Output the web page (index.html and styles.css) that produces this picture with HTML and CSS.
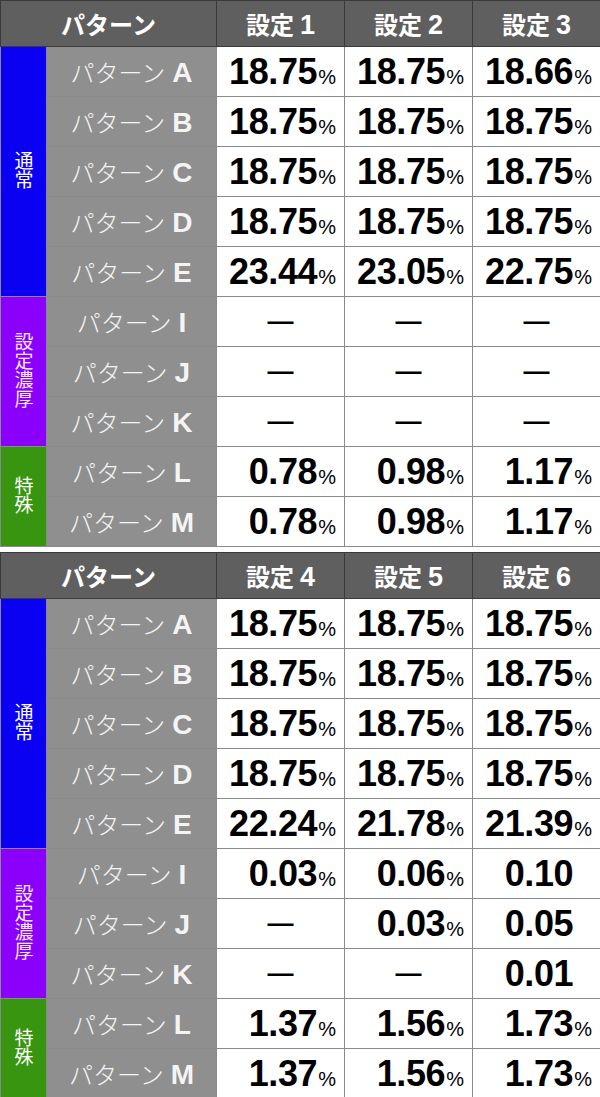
FILE: index.html
```html
<!DOCTYPE html>
<html lang="ja">
<head>
<meta charset="utf-8">
<title>パターン振り分け</title>
<link rel="stylesheet" href="styles.css">
</head>
<body>
<div class="page">
  <table class="rates">
    <colgroup>
      <col class="c-cat"><col class="c-pat"><col class="c-set"><col class="c-set"><col class="c-set">
    </colgroup>
    <thead>
      <tr class="head">
        <th colspan="2">パターン</th>
        <th>設定<b>1</b></th>
        <th>設定<b>2</b></th>
        <th>設定<b>3</b></th>
      </tr>
    </thead>
    <tbody>
      <tr>
        <td class="cat blue" rowspan="5"><span>通常</span></td>
        <td class="pat">パターン<b>A</b></td>
        <td class="num">18.75<i>%</i></td><td class="num">18.75<i>%</i></td><td class="num">18.66<i>%</i></td>
      </tr>
      <tr>
        <td class="pat">パターン<b>B</b></td>
        <td class="num">18.75<i>%</i></td><td class="num">18.75<i>%</i></td><td class="num">18.75<i>%</i></td>
      </tr>
      <tr>
        <td class="pat">パターン<b>C</b></td>
        <td class="num">18.75<i>%</i></td><td class="num">18.75<i>%</i></td><td class="num">18.75<i>%</i></td>
      </tr>
      <tr>
        <td class="pat">パターン<b>D</b></td>
        <td class="num">18.75<i>%</i></td><td class="num">18.75<i>%</i></td><td class="num">18.75<i>%</i></td>
      </tr>
      <tr>
        <td class="pat">パターン<b>E</b></td>
        <td class="num">23.44<i>%</i></td><td class="num">23.05<i>%</i></td><td class="num">22.75<i>%</i></td>
      </tr>
      <tr>
        <td class="cat purple" rowspan="3"><span>設定濃厚</span></td>
        <td class="pat">パターン<b>I</b></td>
        <td class="dash">—</td><td class="dash">—</td><td class="dash">—</td>
      </tr>
      <tr>
        <td class="pat">パターン<b>J</b></td>
        <td class="dash">—</td><td class="dash">—</td><td class="dash">—</td>
      </tr>
      <tr>
        <td class="pat">パターン<b>K</b></td>
        <td class="dash">—</td><td class="dash">—</td><td class="dash">—</td>
      </tr>
      <tr>
        <td class="cat green" rowspan="2"><span>特殊</span></td>
        <td class="pat">パターン<b>L</b></td>
        <td class="num">0.78<i>%</i></td><td class="num">0.98<i>%</i></td><td class="num">1.17<i>%</i></td>
      </tr>
      <tr>
        <td class="pat">パターン<b>M</b></td>
        <td class="num">0.78<i>%</i></td><td class="num">0.98<i>%</i></td><td class="num">1.17<i>%</i></td>
      </tr>
    </tbody>
  </table>

  <table class="rates">
    <colgroup>
      <col class="c-cat"><col class="c-pat"><col class="c-set"><col class="c-set"><col class="c-set">
    </colgroup>
    <thead>
      <tr class="head">
        <th colspan="2">パターン</th>
        <th>設定<b>4</b></th>
        <th>設定<b>5</b></th>
        <th>設定<b>6</b></th>
      </tr>
    </thead>
    <tbody>
      <tr>
        <td class="cat blue" rowspan="5"><span>通常</span></td>
        <td class="pat">パターン<b>A</b></td>
        <td class="num">18.75<i>%</i></td><td class="num">18.75<i>%</i></td><td class="num">18.75<i>%</i></td>
      </tr>
      <tr>
        <td class="pat">パターン<b>B</b></td>
        <td class="num">18.75<i>%</i></td><td class="num">18.75<i>%</i></td><td class="num">18.75<i>%</i></td>
      </tr>
      <tr>
        <td class="pat">パターン<b>C</b></td>
        <td class="num">18.75<i>%</i></td><td class="num">18.75<i>%</i></td><td class="num">18.75<i>%</i></td>
      </tr>
      <tr>
        <td class="pat">パターン<b>D</b></td>
        <td class="num">18.75<i>%</i></td><td class="num">18.75<i>%</i></td><td class="num">18.75<i>%</i></td>
      </tr>
      <tr>
        <td class="pat">パターン<b>E</b></td>
        <td class="num">22.24<i>%</i></td><td class="num">21.78<i>%</i></td><td class="num">21.39<i>%</i></td>
      </tr>
      <tr>
        <td class="cat purple" rowspan="3"><span>設定濃厚</span></td>
        <td class="pat">パターン<b>I</b></td>
        <td class="num">0.03<i>%</i></td><td class="num">0.06<i>%</i></td><td class="num">0.10<i class="blank">%</i></td>
      </tr>
      <tr>
        <td class="pat">パターン<b>J</b></td>
        <td class="dash">—</td><td class="num">0.03<i>%</i></td><td class="num">0.05<i class="blank">%</i></td>
      </tr>
      <tr>
        <td class="pat">パターン<b>K</b></td>
        <td class="dash">—</td><td class="dash">—</td><td class="num">0.01<i class="blank">%</i></td>
      </tr>
      <tr>
        <td class="cat green" rowspan="2"><span>特殊</span></td>
        <td class="pat">パターン<b>L</b></td>
        <td class="num">1.37<i>%</i></td><td class="num">1.56<i>%</i></td><td class="num">1.73<i>%</i></td>
      </tr>
      <tr>
        <td class="pat">パターン<b>M</b></td>
        <td class="num">1.37<i>%</i></td><td class="num">1.56<i>%</i></td><td class="num">1.73<i>%</i></td>
      </tr>
    </tbody>
  </table>
</div>
</body>
</html>
```

FILE: styles.css
```css
html, body {
  margin: 0;
  padding: 0;
  background: #ffffff;
}

.page {
  width: 600px;
  display: flex;
  flex-direction: column;
  gap: 5px;
}

.rates {
  width: 600px;
  border-collapse: collapse;
  table-layout: fixed;
  font-family: "Liberation Sans", "Noto Sans CJK JP", sans-serif;
}

.c-cat { width: 46px; }
.c-pat { width: 170px; }
.c-set { width: 128px; }

.rates th,
.rates td {
  padding: 0;
  border: 1px solid #8a8a8a;
}

.head th {
  height: 45px;
  background: #5f5f5f;
  color: #ffffff;
  border-color: #3a3a3a;
  font-family: "Noto Sans CJK JP", sans-serif;
  font-weight: 700;
  font-size: 24px;
  text-align: center;
  vertical-align: middle;
}

.head th b {
  font-family: "Liberation Sans", sans-serif;
  font-weight: 700;
  font-size: 27px;
  margin-left: 6px;
}

.rates tbody td {
  height: 49px;
  vertical-align: middle;
}

.cat {
  border-color: #3a3a3a;
  color: #ffffff;
  text-align: center;
}

.cat span {
  display: inline-block;
  writing-mode: vertical-rl;
  text-orientation: upright;
  font-family: "Noto Sans CJK JP", sans-serif;
  font-size: 19px;
  line-height: 20px;
  letter-spacing: 0;
}

.blue { background: #0a00f2; }
.purple { background: #8a00fb; color: #fbeaff; }
.green { background: #38950f; }

.pat {
  background: #8f8f8f;
  border-color: #3f3f3f;
  color: #f4f4f4;
  text-align: center;
  font-family: "Noto Sans CJK JP", sans-serif;
  font-weight: 300;
  font-size: 24px;
  white-space: nowrap;
}

.pat b {
  font-family: "Liberation Sans", sans-serif;
  font-weight: 700;
  font-size: 28px;
  margin-left: 7px;
}

.num {
  background: #ffffff;
  color: #000000;
  text-align: right;
  padding-right: 8px !important;
  font-family: "Liberation Sans", sans-serif;
  font-weight: 700;
  font-size: 36px;
  letter-spacing: -0.4px;
  white-space: nowrap;
}

.num i {
  font-style: normal;
  font-weight: 400;
  font-size: 20px;
  letter-spacing: 0;
  margin-left: 1px;
}

.num i.blank {
  visibility: hidden;
}

.dash {
  background: #ffffff;
  color: #000000;
  text-align: center;
  font-family: "Liberation Sans", sans-serif;
  font-weight: 700;
  font-size: 26px;
}
```
